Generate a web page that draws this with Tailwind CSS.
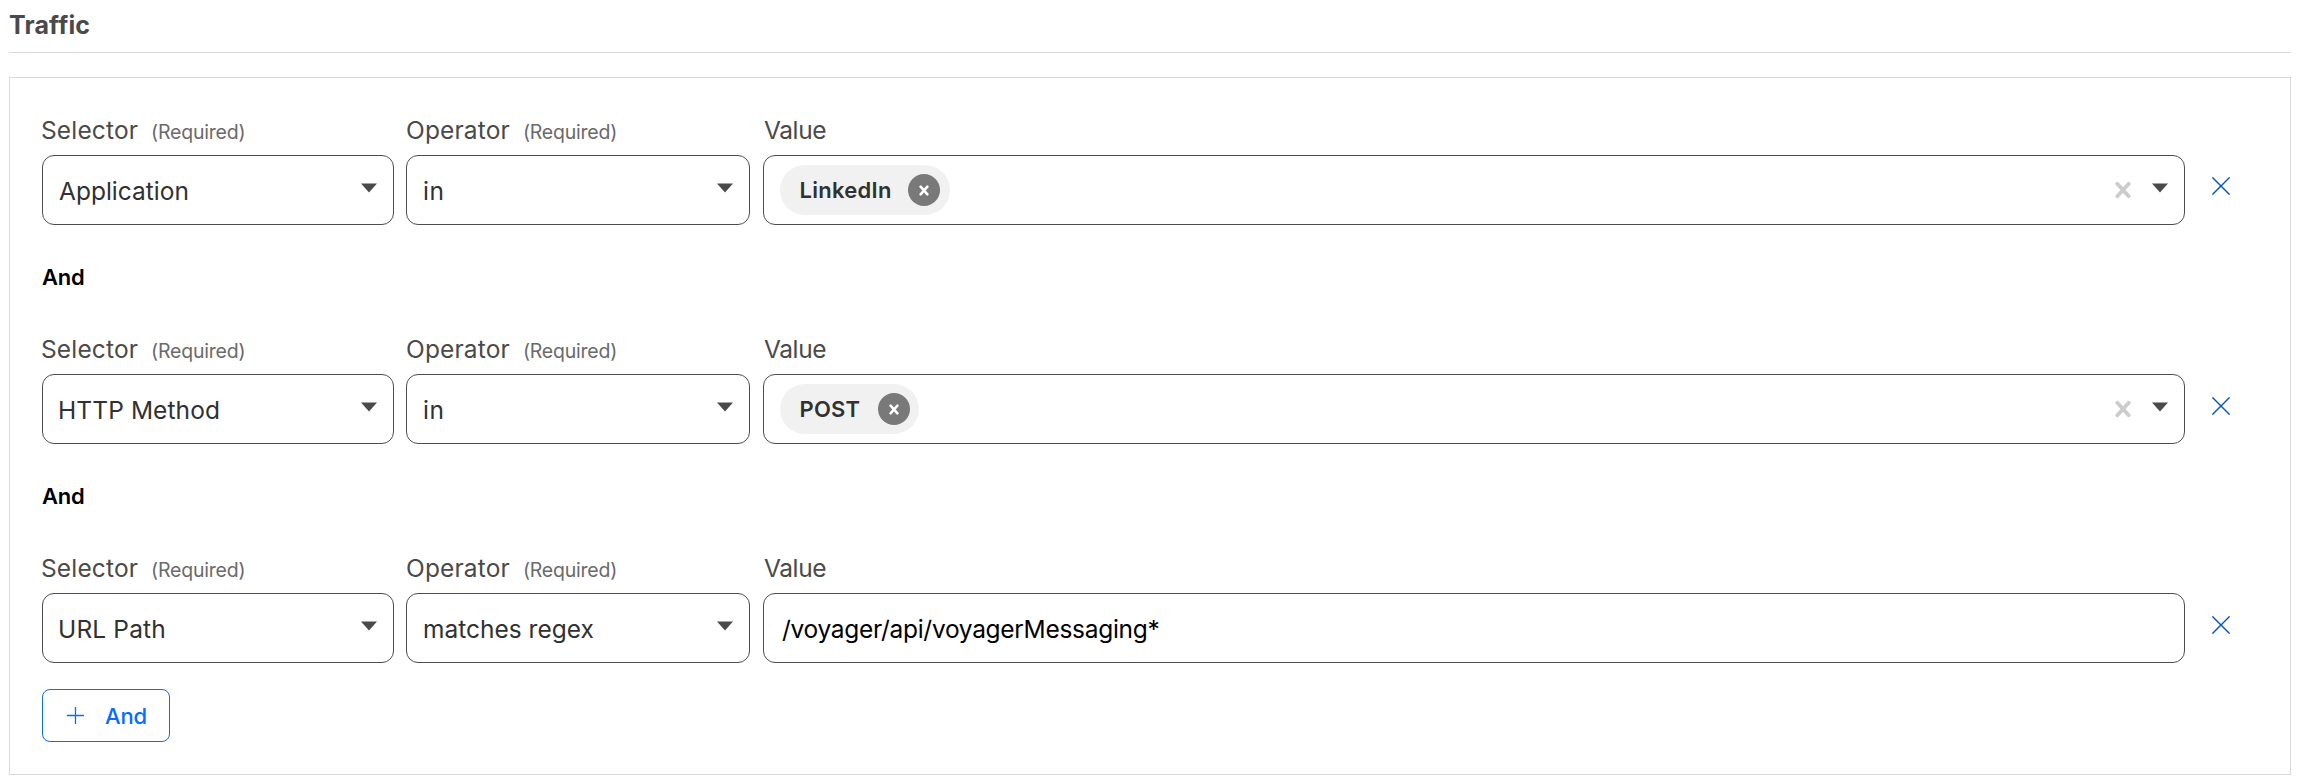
<!DOCTYPE html>
<html lang="en">
<head>
<meta charset="utf-8">
<title>Traffic</title>
<script src="https://cdn.jsdelivr.net/npm/@tailwindcss/browser@4"></script>
</head>
<body class="bg-white font-['Inter',sans-serif] text-[24.5px] leading-[30px] text-[#4a4a4a] antialiased">
<svg class="hidden">
  <symbol id="caret" viewBox="0 0 16 10"><path d="M0 .5H16L8 9.5Z" fill="#4a4a4a"/></symbol>
  <symbol id="clear" viewBox="0 0 16 18"><path d="M2.3 2.8L13.7 15.2M13.7 2.8L2.3 15.2" stroke="#ccc" stroke-width="3.8" stroke-linecap="round"/></symbol>
  <symbol id="remove" viewBox="0 0 18 18"><path d="M.4 .4L17.6 17.6M17.6 .4L.4 17.6" stroke="#0051c3" stroke-width="1.4"/></symbol>
  <symbol id="chip-x" viewBox="0 0 10 11"><path d="M1.6 1.7L8.4 9.3M8.4 1.7L1.6 9.3" stroke="#fff" stroke-width="2.5" stroke-linecap="round"/></symbol>
</svg>
<main class="flex h-[775px] w-[2291px] flex-col pl-[9px]">
  <h1 class="h-[53px] border-b border-[#d9d9d9] pt-[10px] text-[25px] font-bold tracking-[0.15px]">Traffic</h1>
  <section class="mt-6 h-[698px] border border-[#d9d9d9] pt-[37px] pl-8">

    <div class="flex">
      <div class="mr-3 w-[352px]">
        <div class="mb-[10px] -ml-px flex h-[30px] items-baseline gap-[13px]"><span class="tracking-[0.15px]">Selector</span><span class="text-[19.5px] tracking-[-0.22px] text-[#6a6a6a]">(Required)</span></div>
        <div class="flex h-[70px] items-center justify-between rounded-[12px] border border-[#4d4d4d] pr-4 pl-4 text-[#313131]"><span class="pt-[2px]">Application</span><svg class="mb-[5px] h-[10px] w-4"><use href="#caret"/></svg></div>
      </div>
      <div class="mr-[13px] w-[344px]">
        <div class="mb-[10px] flex h-[30px] items-baseline gap-[13px]"><span class="tracking-[0.15px]">Operator</span><span class="text-[19.5px] tracking-[-0.22px] text-[#6a6a6a]">(Required)</span></div>
        <div class="flex h-[70px] items-center justify-between rounded-[12px] border border-[#4d4d4d] pr-4 pl-4 text-[#313131]"><span class="pt-[2px] tracking-[0.5px]">in</span><svg class="mb-[5px] h-[10px] w-4"><use href="#caret"/></svg></div>
      </div>
      <div class="w-[1422px]">
        <div class="mb-[10px] pl-px tracking-[-0.4px]">Value</div>
        <div class="flex h-[70px] items-center rounded-[12px] border border-[#4d4d4d] pr-4 pl-4">
          <div class="flex h-[50px] w-[170px] items-center justify-between rounded-full bg-[#f1f1f1] pr-[10px] pl-[19.5px] text-[22px] font-semibold text-[#313131]"><span class="tracking-[0.28px]">LinkedIn</span><span class="flex size-8 items-center justify-center rounded-full bg-[#797979]"><svg class="h-[11px] w-[10px]"><use href="#chip-x"/></svg></span></div>
          <svg class="mr-[21px] ml-auto h-[18px] w-4"><use href="#clear"/></svg>
          <svg class="mb-[5px] h-[10px] w-4"><use href="#caret"/></svg>
        </div>
      </div>
      <svg class="mt-[62px] ml-[27px] size-[18px]"><use href="#remove"/></svg>
    </div>

    <div class="mt-[38px] mb-[43px] text-[22px] leading-7 font-semibold tracking-[-0.2px] text-black">And</div>

    <div class="flex">
      <div class="mr-3 w-[352px]">
        <div class="mb-[10px] -ml-px flex h-[30px] items-baseline gap-[13px]"><span class="tracking-[0.15px]">Selector</span><span class="text-[19.5px] tracking-[-0.22px] text-[#6a6a6a]">(Required)</span></div>
        <div class="flex h-[70px] items-center justify-between rounded-[12px] border border-[#4d4d4d] pr-4 pl-[15px] text-[#313131]"><span class="pt-[2px] tracking-[0.1px]">HTTP Method</span><svg class="mb-[5px] h-[10px] w-4"><use href="#caret"/></svg></div>
      </div>
      <div class="mr-[13px] w-[344px]">
        <div class="mb-[10px] flex h-[30px] items-baseline gap-[13px]"><span class="tracking-[0.15px]">Operator</span><span class="text-[19.5px] tracking-[-0.22px] text-[#6a6a6a]">(Required)</span></div>
        <div class="flex h-[70px] items-center justify-between rounded-[12px] border border-[#4d4d4d] pr-4 pl-4 text-[#313131]"><span class="pt-[2px] tracking-[0.5px]">in</span><svg class="mb-[5px] h-[10px] w-4"><use href="#caret"/></svg></div>
      </div>
      <div class="w-[1422px]">
        <div class="mb-[10px] pl-px tracking-[-0.4px]">Value</div>
        <div class="flex h-[70px] items-center rounded-[12px] border border-[#4d4d4d] pr-4 pl-4">
          <div class="flex h-[50px] w-[139px] items-center justify-between rounded-full bg-[#f1f1f1] pr-[9px] pl-[19.5px] text-[22px] font-semibold text-[#313131]"><span class="tracking-[0.2px]">POST</span><span class="flex size-8 items-center justify-center rounded-full bg-[#797979]"><svg class="h-[11px] w-[10px]"><use href="#chip-x"/></svg></span></div>
          <svg class="mr-[21px] ml-auto h-[18px] w-4"><use href="#clear"/></svg>
          <svg class="mb-[5px] h-[10px] w-4"><use href="#caret"/></svg>
        </div>
      </div>
      <svg class="mt-[63px] ml-[27px] size-[18px]"><use href="#remove"/></svg>
    </div>

    <div class="mt-[38px] mb-[43px] text-[22px] leading-7 font-semibold tracking-[-0.2px] text-black">And</div>

    <div class="flex">
      <div class="mr-3 w-[352px]">
        <div class="mb-[10px] -ml-px flex h-[30px] items-baseline gap-[13px]"><span class="tracking-[0.15px]">Selector</span><span class="text-[19.5px] tracking-[-0.22px] text-[#6a6a6a]">(Required)</span></div>
        <div class="flex h-[70px] items-center justify-between rounded-[12px] border border-[#4d4d4d] pr-4 pl-[15px] text-[#313131]"><span class="pt-[2px] tracking-[0.15px]">URL Path</span><svg class="mb-[5px] h-[10px] w-4"><use href="#caret"/></svg></div>
      </div>
      <div class="mr-[13px] w-[344px]">
        <div class="mb-[10px] flex h-[30px] items-baseline gap-[13px]"><span class="tracking-[0.15px]">Operator</span><span class="text-[19.5px] tracking-[-0.22px] text-[#6a6a6a]">(Required)</span></div>
        <div class="flex h-[70px] items-center justify-between rounded-[12px] border border-[#4d4d4d] pr-4 pl-4 text-[#313131]"><span class="pt-[2px]">matches regex</span><svg class="mb-[5px] h-[10px] w-4"><use href="#caret"/></svg></div>
      </div>
      <div class="w-[1422px]">
        <div class="mb-[10px] pl-px tracking-[-0.4px]">Value</div>
        <div class="flex h-[70px] items-center rounded-[12px] border border-[#4d4d4d] pl-[18px] text-black"><span class="pt-[2px] tracking-[-0.3px]">/voyager/api/voyagerMessaging*</span></div>
      </div>
      <svg class="mt-[63px] ml-[27px] size-[18px]"><use href="#remove"/></svg>
    </div>

    <button class="mt-[26px] flex h-[53px] w-32 items-center rounded-lg border border-[#056dff] pl-6 text-[22px] font-medium text-[#056dff]"><svg class="mr-[21px] mb-px size-[17px]" viewBox="0 0 17 17"><path d="M8.5 0V17M0 8.5H17" stroke="#056dff" stroke-width="1.3"/></svg><span class="pt-px tracking-[-0.17px]">And</span></button>
  </section>
</main>
</body>
</html>
